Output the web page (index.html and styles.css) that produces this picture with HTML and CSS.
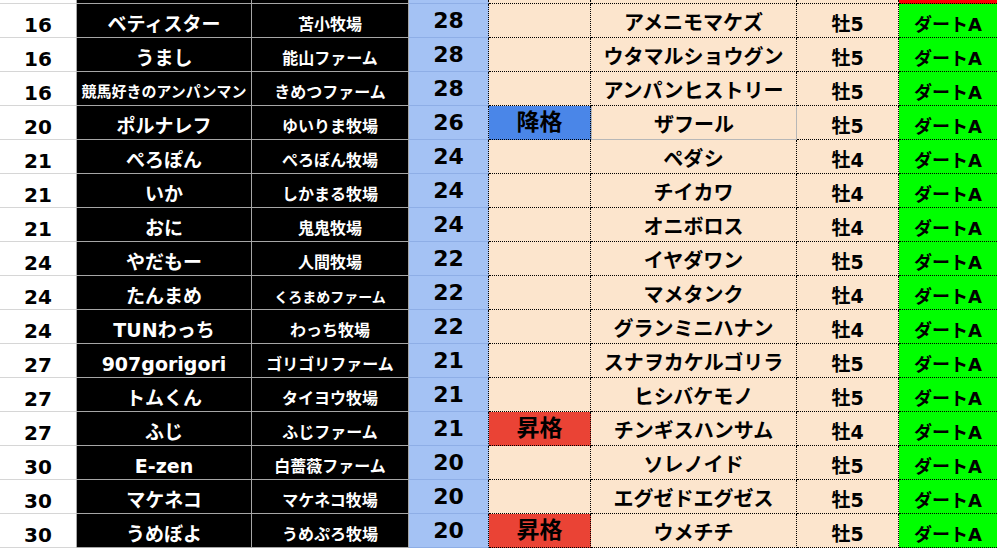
FILE: index.html
```html
<!DOCTYPE html>
<html lang="ja">
<head>
<meta charset="utf-8">
<title>ランキング</title>
<link rel="stylesheet" href="styles.css">
</head>
<body>
<div class="sheet">
  <div class="c rank top"></div><div class="c owner top"></div><div class="c farm top"></div><div class="c pts top"></div><div class="c mv top"></div><div class="c horse top"></div><div class="c sex top"></div><div class="c cls top red"></div>

  <div class="c rank">16</div><div class="c owner">ベティスター</div><div class="c farm">苫小牧場</div><div class="c pts">28</div><div class="c mv"></div><div class="c horse">アメニモマケズ</div><div class="c sex">牡5</div><div class="c cls">ダートA</div>
  <div class="c rank">16</div><div class="c owner">うまし</div><div class="c farm">能山ファーム</div><div class="c pts">28</div><div class="c mv"></div><div class="c horse">ウタマルショウグン</div><div class="c sex">牡5</div><div class="c cls">ダートA</div>
  <div class="c rank">16</div><div class="c owner owner-sm">競馬好きのアンパンマン</div><div class="c farm">きめつファーム</div><div class="c pts">28</div><div class="c mv"></div><div class="c horse">アンパンヒストリー</div><div class="c sex">牡5</div><div class="c cls">ダートA</div>
  <div class="c rank">20</div><div class="c owner">ポルナレフ</div><div class="c farm">ゆいりま牧場</div><div class="c pts">26</div><div class="c mv down">降格</div><div class="c horse horse-solid">ザフール</div><div class="c sex">牡5</div><div class="c cls">ダートA</div>
  <div class="c rank">21</div><div class="c owner">ぺろぽん</div><div class="c farm">ぺろぽん牧場</div><div class="c pts">24</div><div class="c mv"></div><div class="c horse">ペダシ</div><div class="c sex">牡4</div><div class="c cls">ダートA</div>
  <div class="c rank">21</div><div class="c owner">いか</div><div class="c farm">しかまる牧場</div><div class="c pts">24</div><div class="c mv"></div><div class="c horse">チイカワ</div><div class="c sex">牡4</div><div class="c cls">ダートA</div>
  <div class="c rank">21</div><div class="c owner">おに</div><div class="c farm">鬼鬼牧場</div><div class="c pts">24</div><div class="c mv"></div><div class="c horse">オニボロス</div><div class="c sex">牡4</div><div class="c cls">ダートA</div>
  <div class="c rank">24</div><div class="c owner">やだもー</div><div class="c farm">人間牧場</div><div class="c pts">22</div><div class="c mv"></div><div class="c horse">イヤダワン</div><div class="c sex">牡5</div><div class="c cls">ダートA</div>
  <div class="c rank">24</div><div class="c owner">たんまめ</div><div class="c farm farm-sm">くろまめファーム</div><div class="c pts">22</div><div class="c mv"></div><div class="c horse">マメタンク</div><div class="c sex">牡4</div><div class="c cls">ダートA</div>
  <div class="c rank">24</div><div class="c owner">TUNわっち</div><div class="c farm">わっち牧場</div><div class="c pts">22</div><div class="c mv"></div><div class="c horse">グランミニハナン</div><div class="c sex">牡4</div><div class="c cls">ダートA</div>
  <div class="c rank">27</div><div class="c owner">907gorigori</div><div class="c farm">ゴリゴリファーム</div><div class="c pts">21</div><div class="c mv"></div><div class="c horse">スナヲカケルゴリラ</div><div class="c sex">牡5</div><div class="c cls">ダートA</div>
  <div class="c rank">27</div><div class="c owner">トムくん</div><div class="c farm">タイヨウ牧場</div><div class="c pts">21</div><div class="c mv"></div><div class="c horse">ヒシバケモノ</div><div class="c sex">牡5</div><div class="c cls">ダートA</div>
  <div class="c rank">27</div><div class="c owner">ふじ</div><div class="c farm">ふじファーム</div><div class="c pts">21</div><div class="c mv up">昇格</div><div class="c horse">チンギスハンサム</div><div class="c sex">牡4</div><div class="c cls">ダートA</div>
  <div class="c rank">30</div><div class="c owner">E-zen</div><div class="c farm">白薔薇ファーム</div><div class="c pts">20</div><div class="c mv"></div><div class="c horse">ソレノイド</div><div class="c sex">牡5</div><div class="c cls">ダートA</div>
  <div class="c rank">30</div><div class="c owner">マケネコ</div><div class="c farm">マケネコ牧場</div><div class="c pts">20</div><div class="c mv"></div><div class="c horse">エグゼドエグゼス</div><div class="c sex">牡5</div><div class="c cls">ダートA</div>
  <div class="c rank">30</div><div class="c owner">うめぼよ</div><div class="c farm">うめぷろ牧場</div><div class="c pts">20</div><div class="c mv up">昇格</div><div class="c horse">ウメチチ</div><div class="c sex">牡5</div><div class="c cls">ダートA</div>
</div>
</body>
</html>
```

FILE: styles.css
```css
html, body {
  margin: 0;
  padding: 0;
  background: #ffffff;
  overflow: hidden;
}

.sheet {
  display: grid;
  grid-template-columns: 77px 175px 157px 80px 102px 206px 102px 1fr;
  grid-template-rows: 4px;
  grid-auto-rows: 34px;
  width: 997px;
  font-family: "DejaVu Sans", "Noto Sans CJK JP", sans-serif;
  font-weight: bold;
  color: #000;
}

.c {
  box-sizing: border-box;
  display: flex;
  align-items: center;
  justify-content: center;
  white-space: nowrap;
  overflow: hidden;
  line-height: 1;
  border-right: 1px solid #c6c6c6;
  border-bottom: 1px solid #c6c6c6;
}

.c.top {
  padding: 0;
}

.rank {
  background: #ffffff;
  font-size: 20px;
  padding-top: 8px;
  border-right-color: #a8a8a8;
  border-bottom-color: #d6d6d6;
}

.owner {
  background: #000000;
  color: #ffffff;
  font-size: 19px;
  padding-top: 7px;
  border-right-color: #a6a6a6;
  border-bottom-color: #a6a6a6;
}

.owner-sm {
  font-size: 15px;
}

.farm {
  background: #000000;
  color: #ffffff;
  font-size: 16px;
  padding-top: 9px;
  border-right-color: #a6a6a6;
  border-bottom-color: #a6a6a6;
}

.farm-sm {
  font-size: 14px;
}

.pts {
  background: #a4c2f4;
  font-size: 22px;
  padding-top: 0px;
  border-right: 1px dotted #000;
  border-bottom-color: #8eaee6;
}

.mv {
  background: #fce5cd;
  font-size: 23px;
  border-right: 1px dotted #000;
  border-bottom: 1px dotted #000;
}

.mv.down {
  background: #4a86e8;
}

.mv.up {
  background: #ea4335;
}

.horse {
  background: #fce5cd;
  font-size: 20px;
  padding-top: 4px;
  border-right: 1px dotted #000;
  border-bottom: 1px dotted #000;
}

.horse-solid {
  border-right: 1px solid #b7b7b7;
  border-left: 1px solid #b7b7b7;
  border-bottom: 1px solid #b7b7b7;
}

.sex {
  background: #fce5cd;
  font-size: 19px;
  padding-top: 8px;
  border-right: 1px dotted #000;
  border-bottom: 1px dotted #000;
}

.cls {
  background: #00ff00;
  font-size: 18px;
  padding-top: 8px;
  border-right: none;
  border-bottom: 1px dotted #000;
}

.cls.red {
  background: #ff0000;
  border-bottom: 1px dotted #000;
}

.c.top.owner, .c.top.farm {
  border-bottom-color: #a6a6a6;
}
```
